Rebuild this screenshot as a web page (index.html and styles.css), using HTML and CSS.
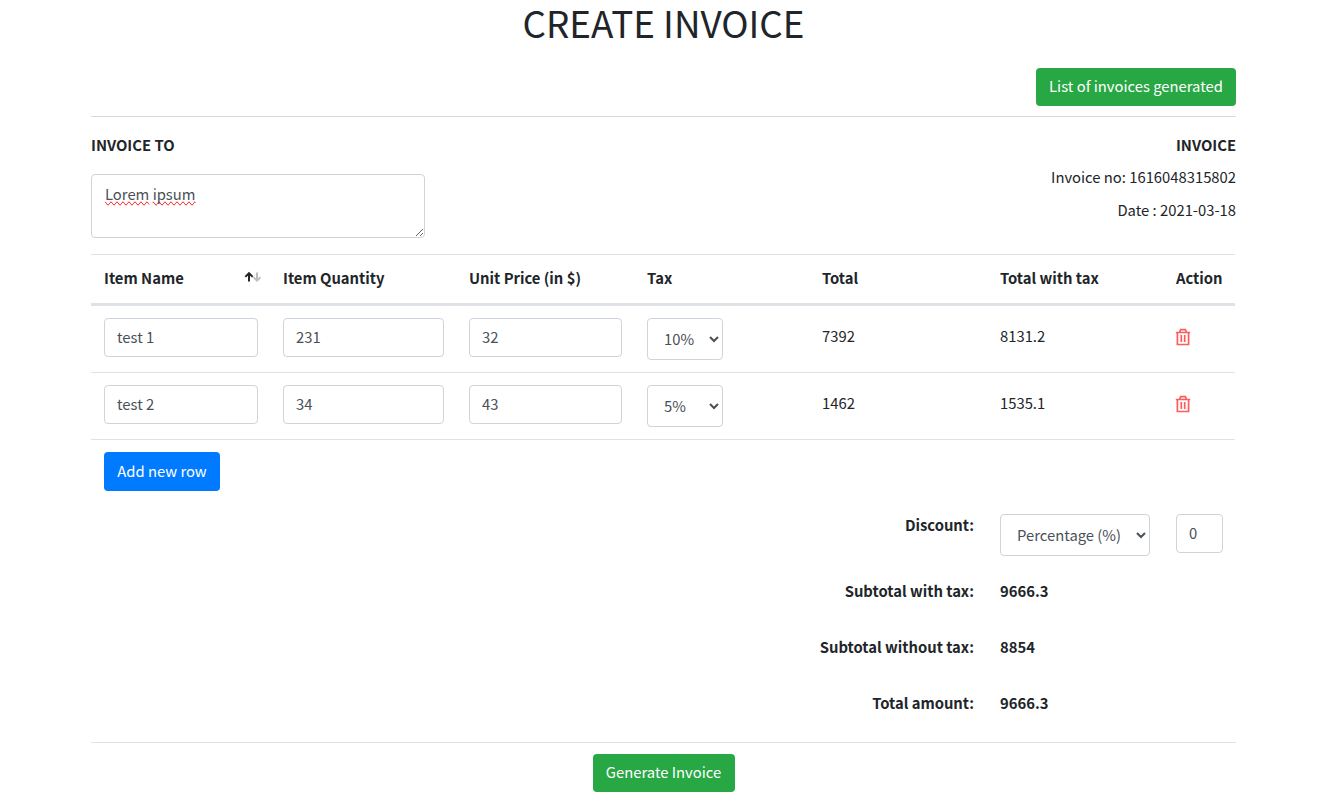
FILE: index.html
```html
<!DOCTYPE html>
<html lang="en">
<head>
<meta charset="utf-8">
<title>Create Invoice</title>
<link rel="stylesheet" href="styles.css">
</head>
<body>
<main class="page">
  <h1 class="title">CREATE INVOICE</h1>
  <div class="toolbar"><button class="btn btn-success">List of invoices generated</button></div>
  <section class="parties">
    <div class="bill-to">
      <div class="label">INVOICE TO</div>
      <div class="control address"><span class="misspelt">Lorem</span> <span class="misspelt">ipsum</span></div>
    </div>
    <div class="meta">
      <strong>INVOICE</strong>
      <span>Invoice no: 1616048315802</span>
      <span class="date">Date : 2021-03-18</span>
    </div>
  </section>
  <section class="items">
    <div class="row head">
      <div class="cell sortable">Item Name
        <svg class="sort" viewBox="0 0 18 12" width="18" height="12" fill="none" stroke-width="2"><path stroke="#212529" d="M5 10.5V2M1.3 5.9 5 2.2 8.7 5.9"/><path stroke="#bcbebf" d="M13 1.5v8M9.5 6.1 13 9.6 16.5 6.1"/></svg>
      </div>
      <div class="cell">Item Quantity</div><div class="cell">Unit Price (in $)</div><div class="cell">Tax</div>
      <div class="cell">Total</div><div class="cell">Total with tax</div><div class="cell">Action</div>
    </div>
    <div class="row">
      <div class="cell"><input class="control" value="test 1"></div>
      <div class="cell"><input class="control" value="231"></div>
      <div class="cell"><input class="control" value="32"></div>
      <div class="cell"><select class="control tax"><option>10%</option></select></div>
      <div class="cell value">7392</div><div class="cell value">8131.2</div>
      <div class="cell"><svg class="trash" viewBox="0 0 16 18" width="16" height="18" fill="none" stroke="#ff5c5c" stroke-width="1.7"><path d="M.8 4.5h14.4M2.4 4.5v12h11.2v-12M4.7 4.2 5.6 1.6h4.8l.9 2.6M6.3 7v7M9.7 7v7"/></svg></div>
    </div>
    <div class="row">
      <div class="cell"><input class="control" value="test 2"></div>
      <div class="cell"><input class="control" value="34"></div>
      <div class="cell"><input class="control" value="43"></div>
      <div class="cell"><select class="control tax"><option>5%</option></select></div>
      <div class="cell value">1462</div><div class="cell value">1535.1</div>
      <div class="cell"><svg class="trash" viewBox="0 0 16 18" width="16" height="18" fill="none" stroke="#ff5c5c" stroke-width="1.7"><path d="M.8 4.5h14.4M2.4 4.5v12h11.2v-12M4.7 4.2 5.6 1.6h4.8l.9 2.6M6.3 7v7M9.7 7v7"/></svg></div>
    </div>
  </section>
  <div class="add"><button class="btn btn-primary">Add new row</button></div>
  <section class="summary">
    <div class="sum discount"><span class="sum-name">Discount:</span><select class="control mode"><option>Percentage (%)</option></select><input class="control amount" value="0"></div>
    <div class="sum"><span class="sum-name">Subtotal with tax:</span><span>9666.3</span></div>
    <div class="sum"><span class="sum-name">Subtotal without tax:</span><span>8854</span></div>
    <div class="sum"><span class="sum-name">Total amount:</span><span>9666.3</span></div>
  </section>
  <footer class="footer"><button class="btn btn-success generate">Generate Invoice</button></footer>
</main>
</body>
</html>
```
FILE: styles.css
```css
* { box-sizing: border-box; }
body {
  margin: 0;
  background: #fff;
  color: #212529;
  font: 14.8px/24px "Noto Sans CJK SC", sans-serif;
}
.page { width: 1145px; margin: 0 91px; }
.title { margin: 0; height: 68px; font-size: 36.8px; line-height: 44px; font-weight: 400; text-align: center; }
.btn {
  height: 38px;
  padding: 0 0 2px;
  border: 1px solid transparent;
  border-radius: 4px;
  color: #fff;
  font: inherit;
  white-space: nowrap;
}
.btn-success { width: 200px; background: #28a745; }
.btn-primary { width: 116px; height: 39px; padding-bottom: 1px; background: #007bff; }
.toolbar { display: flex; justify-content: flex-end; height: 49px; border-bottom: 1px solid #d9d9d9; }
.parties { display: flex; justify-content: space-between; height: 137px; padding-top: 16px; }
.label { height: 41px; font-weight: 700; }
.meta { display: flex; flex-direction: column; gap: 8px; text-align: right; }
.date { margin-top: 1px; }
.control {
  display: block;
  width: 100%;
  height: 39px;
  padding: 5px 12px 7px;
  border: 1px solid #ced4da;
  border-radius: 4px;
  background: #fff;
  color: #495057;
  font: inherit;
  font-weight: 400;
}
.address { width: 334px; height: 64px; padding: 7px 13px; resize: vertical; overflow: auto; }
.misspelt { text-decoration: spelling-error; }
.row {
  display: grid;
  grid-template-columns: 179px 186px 178px 175px 178px 176px 72px;
  width: 1144px;
  height: 67px;
  border-bottom: 1px solid #dee2e6;
}
.head { height: 52px; border-top: 1px solid #dee2e6; border-bottom: 3px solid #dee2e6; font-weight: 700; }
.cell { padding: 12px 12px 0 13px; white-space: nowrap; }
.head .cell { padding-top: 11px; }
.head .sortable { display: flex; justify-content: space-between; padding-right: 8px; }
.sort { margin-top: 5px; }
.row .value { padding-top: 18px; }
.tax { width: 76px; height: 42px; }
.trash { display: block; margin: 10px 0 0 -1px; }
.add { height: 73px; padding: 12px 13px; }
.summary { height: 229px; font-weight: 700; }
.sum { display: grid; grid-template-columns: 883px 150px 47px; column-gap: 26px; height: 56px; }
.discount { height: 66px; }
.sum .control { margin-top: 1px; }
.sum-name { justify-self: end; text-align: right; }
.mode { height: 42px; }
.footer { display: flex; justify-content: center; padding-top: 11px; border-top: 1px solid #e3e3e3; }
.generate { width: 142px; }
```
